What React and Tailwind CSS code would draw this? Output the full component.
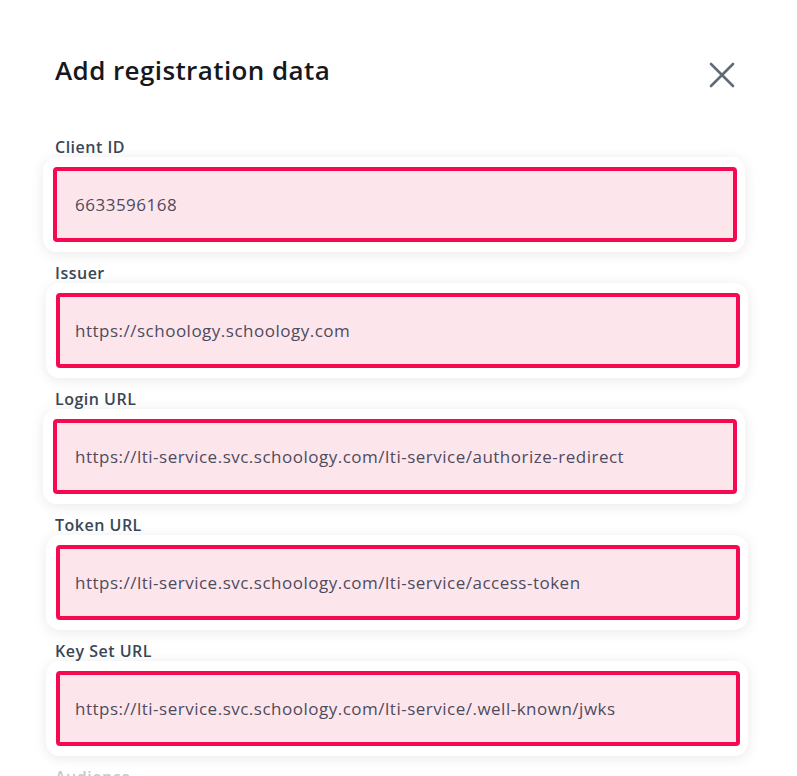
import React from 'react';

const fields = [
  { label: 'Client ID', value: '6633596168', shift: false },
  { label: 'Issuer', value: 'https://schoology.schoology.com', shift: true },
  { label: 'Login URL', value: 'https://lti-service.svc.schoology.com/lti-service/authorize-redirect', shift: false },
  { label: 'Token URL', value: 'https://lti-service.svc.schoology.com/lti-service/access-token', shift: true },
  { label: 'Key Set URL', value: 'https://lti-service.svc.schoology.com/lti-service/.well-known/jwks', shift: true },
];

const Field = ({ label, value, shift }) => (
  <div className="flex flex-col">
    <label className="h-[20px] text-[16px] leading-[20px] tracking-[0.5px] font-semibold text-[#394757]">{label}</label>
    <div
      className={
        'w-[702px] h-[95px] p-[10px] bg-white rounded-[14px] shadow-[0_2px_14px_rgba(0,0,0,0.09)] ' +
        (shift ? 'ml-[-9px]' : 'ml-[-12px]')
      }
    >
      <div
        className={
          'h-full w-[684px] flex items-center bg-[#fde6eb] border-4 border-[#f50a52] rounded-[4px] ' +
          (shift ? 'pl-[15px]' : 'pl-[18px]')
        }
      >
        <span className="text-[17px] tracking-[0.5px] text-[#4d4b5f]">{value}</span>
      </div>
    </div>
  </div>
);

const App = () => {
  return (
    <div className="w-[797px] h-[776px] overflow-hidden bg-white px-[55px] pt-[52px]" style={{ fontFamily: '"Open Sans", "Noto Sans", sans-serif' }}>
      <div className="flex items-start justify-between">
        <h1 className="text-[26px] leading-[36px] tracking-[0.4px] font-semibold text-[#16181d]">Add registration data</h1>
        <button className="mt-[10px] mr-[7px] text-[#5f6b78]">
          <svg width="26" height="26" viewBox="0 0 26 26" fill="none" stroke="currentColor" strokeWidth="2.6" strokeLinecap="round">
            <line x1="2" y1="2" x2="24" y2="24" />
            <line x1="24" y1="2" x2="2" y2="24" />
          </svg>
        </button>
      </div>

      <div className="mt-[49px] flex flex-col gap-[11px]">
        {fields.map((f) => (
          <Field key={f.label} {...f} />
        ))}
        <label className="h-[14px] text-[16px] leading-[20px] tracking-[0.5px] font-semibold text-[#c4c8cf]">Audience</label>
      </div>
    </div>
  );
};

export default App;
